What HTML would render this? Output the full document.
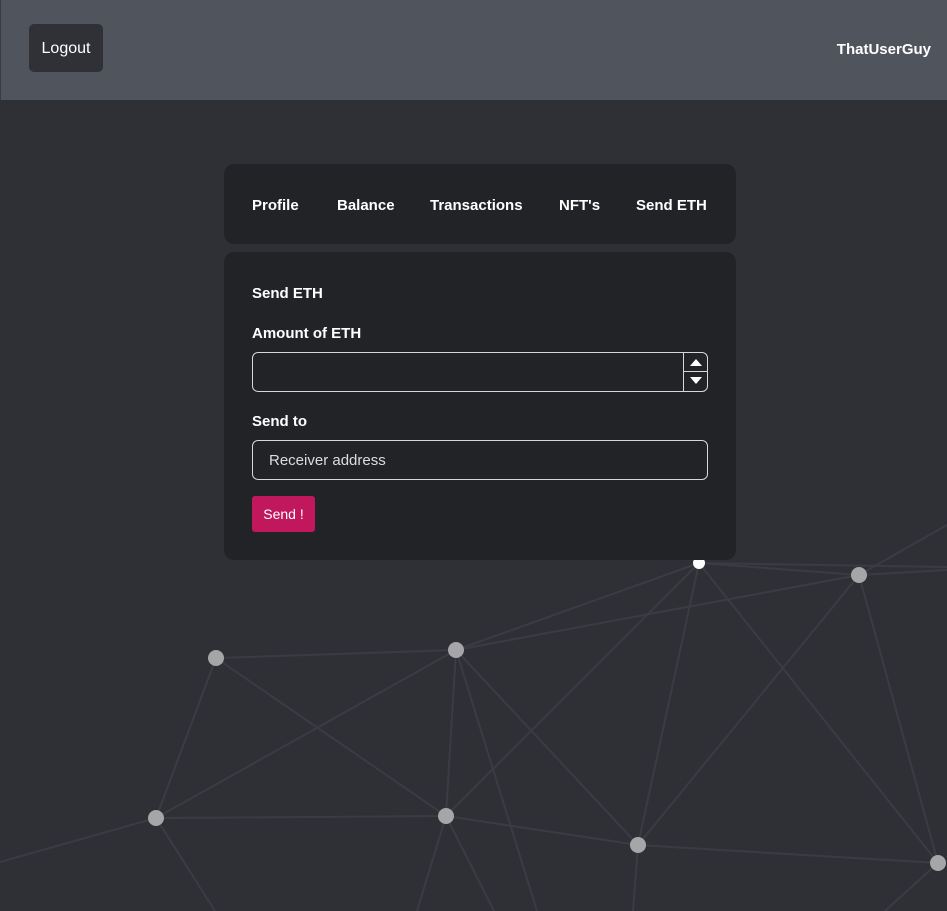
<!DOCTYPE html>
<html><head><style>
*{box-sizing:border-box;margin:0;padding:0}
body{width:947px;height:911px;overflow:hidden;background:#2f3036;font-family:"Segoe UI","Liberation Sans",sans-serif;color:#fff;position:relative}
.hdr{position:absolute;left:0;top:0;width:947px;height:100px;background:#50545c;border-left:1px solid #3a3c42}
.logout{position:absolute;left:28px;top:24px;width:74px;height:48px;background:#303137;border-radius:5px;font-size:16px;line-height:50px;text-align:center}
.user{position:absolute;right:16px;top:41px;font-weight:bold;font-size:15px}
svg{position:absolute;left:0;top:0}
.tabs{position:absolute;left:224px;top:164px;width:512px;height:80px;background:#222327;border-radius:10px}
.tabs span{position:absolute;top:33px;font-weight:bold;font-size:15px}
.card{position:absolute;left:224px;top:252px;width:512px;height:308px;background:#222327;border-radius:10px}
.lbl{position:absolute;left:28px;font-weight:bold;font-size:15px}
.inp{position:absolute;left:28px;width:456px;height:40px;border:1px solid #d8d8d8;border-radius:6px}
.btn{position:absolute;left:28px;top:244px;width:63px;height:36px;background:#c0175d;border-radius:3px;font-size:14px;line-height:36px;text-align:center}
</style></head><body>
<svg width="947" height="911" stroke="#3b3c43" stroke-width="2" fill="none">
<line x1="216" y1="658" x2="456" y2="650"/><line x1="216" y1="658" x2="156" y2="818"/><line x1="216" y1="658" x2="446" y2="816"/>
<line x1="456" y1="650" x2="156" y2="818"/><line x1="456" y1="650" x2="446" y2="816"/><line x1="456" y1="650" x2="638" y2="845"/>
<line x1="456" y1="650" x2="699" y2="563"/><line x1="456" y1="650" x2="859" y2="575"/><line x1="456" y1="650" x2="537" y2="911"/>
<line x1="699" y1="563" x2="446" y2="816"/><line x1="699" y1="563" x2="638" y2="845"/><line x1="699" y1="563" x2="938" y2="863"/>
<line x1="699" y1="563" x2="947" y2="567"/><line x1="699" y1="563" x2="859" y2="575"/>
<line x1="859" y1="575" x2="947" y2="525"/><line x1="859" y1="575" x2="947" y2="570"/><line x1="859" y1="575" x2="638" y2="845"/><line x1="859" y1="575" x2="938" y2="863"/>
<line x1="156" y1="818" x2="446" y2="816"/><line x1="156" y1="818" x2="0" y2="862"/><line x1="156" y1="818" x2="215" y2="911"/>
<line x1="446" y1="816" x2="638" y2="845"/><line x1="446" y1="816" x2="417" y2="911"/><line x1="446" y1="816" x2="494" y2="911"/>
<line x1="638" y1="845" x2="938" y2="863"/><line x1="638" y1="845" x2="633" y2="911"/><line x1="938" y1="863" x2="885" y2="911"/>
<g fill="#a6a6a8" stroke="none">
<circle cx="216" cy="658" r="8"/><circle cx="456" cy="650" r="8"/><circle cx="156" cy="818" r="8"/><circle cx="446" cy="816" r="8"/>
<circle cx="638" cy="845" r="8"/><circle cx="938" cy="863" r="8"/><circle cx="859" cy="575" r="8"/>
<circle cx="699" cy="563" r="6" fill="#fff"/></g>
</svg>
<div class="hdr"><div class="logout">Logout</div><div class="user">ThatUserGuy</div></div>
<div class="tabs"><span style="left:28px">Profile</span><span style="left:113px">Balance</span><span style="left:206px">Transactions</span><span style="left:335px">NFT's</span><span style="left:412px">Send ETH</span></div>
<div class="card">
<div class="lbl" style="top:33px">Send ETH</div>
<div class="lbl" style="top:73px">Amount of ETH</div>
<div class="inp" style="top:100px"><div style="position:absolute;right:0;top:0;width:24px;height:38px;border-left:1px solid #d8d8d8">
<div style="height:19px;border-bottom:1px solid #d8d8d8;position:relative"><div style="position:absolute;left:6px;top:6px;border:6px solid transparent;border-top:0;border-bottom:7px solid #fff"></div></div>
<div style="position:relative"><div style="position:absolute;left:6px;top:5px;border:6px solid transparent;border-bottom:0;border-top:7px solid #fff"></div></div>
</div></div>
<div class="lbl" style="top:161px">Send to</div>
<div class="inp" style="top:188px;padding-left:16px;line-height:40px;font-size:15px;color:#ddd">Receiver address</div>
<div class="btn">Send !</div>
</div>
</body></html>
